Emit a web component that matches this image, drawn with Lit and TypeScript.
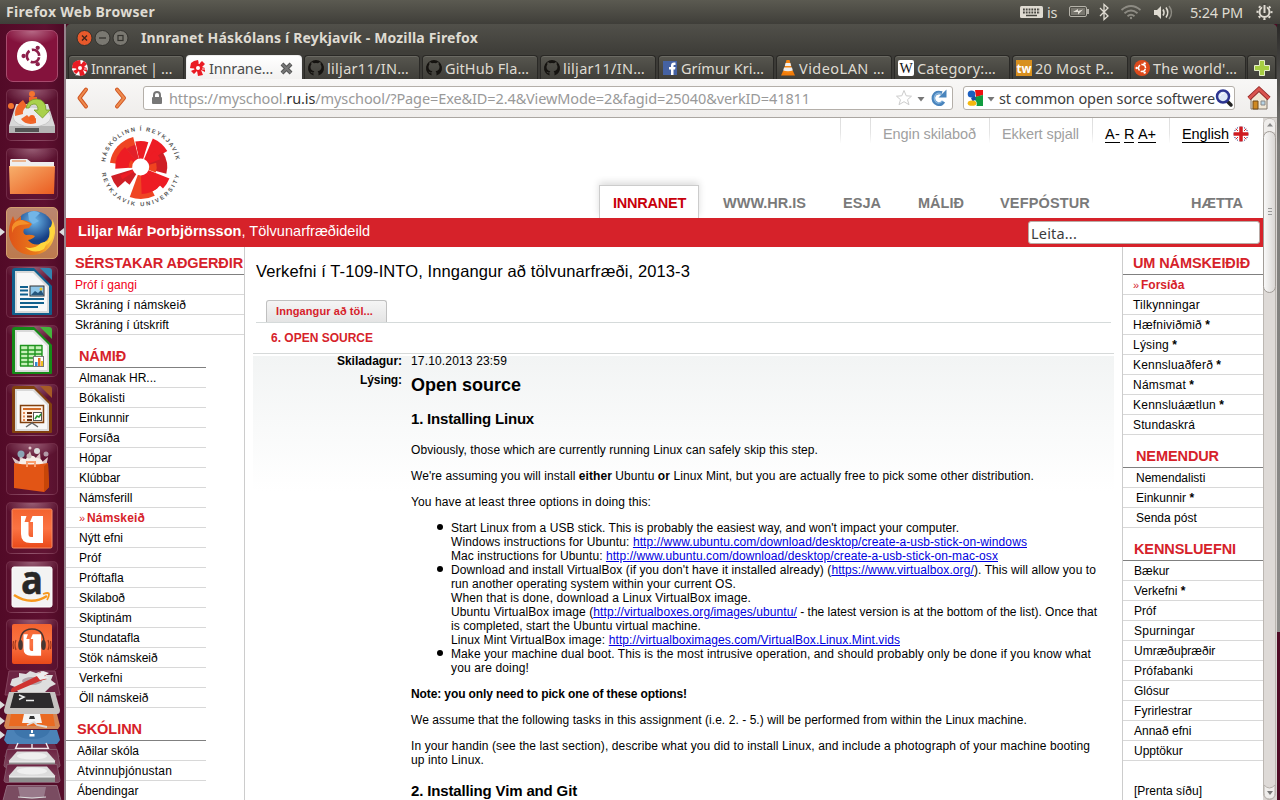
import { LitElement, html, svg, css, TemplateResult } from "lit";
import { customElement } from "lit/decorators.js";

/** A run of text tracked so that it occupies `width` pixels. */
const fit = (content: unknown, width: number, cls = "") =>
  html`<span class="fit ${cls}" data-w=${width}>${content}</span>`;

const gearCircle = (fill: string) => svg`
  <circle r="6.6" fill="none" stroke=${fill} stroke-width="2.8" stroke-dasharray="11.2 2.62" stroke-dashoffset="-1.4"/>
  <circle cx="-10" cy="0" r="2.3" fill=${fill}/><circle cx="5" cy="-8.7" r="2.3" fill=${fill}/><circle cx="5" cy="8.7" r="2.3" fill=${fill}/>`;

const ruMark = svg`
  <path d="M-4 -7L0-8L1-4L4-7L7-4L4-1L7 0L7 4L3 2L5 7L0 8L-1 3L-4 6L-7 3L-3 1L-8 0L-7-5Z" fill="#ea1c24"/>
  <path d="M1-4L2-8M-4 1L-8 1.500M-1 4L-4 7.500M4 1L8 1" stroke="#fff" stroke-width=".9"/><circle r="2" fill="#fff"/>`;

const octocat = svg`<path d="M0-8a8 8 0 0 0-2.5 15.6V5.2C-4.600 5.600-5.200 4.400-5.600 3.500c1 .2 1.400 1.500 3.200 1C-2.200 3.700-1.900 3.400-1.600 3.200-4.300 2.800-5.500 1.500-5.500-.9c0-1 .3-1.800.9-2.500-.2-.7-.2-1.500.1-2.300 1 0 1.900.6 2.500 1a8 8 0 0 1 4 0c.6-.4 1.500-1 2.500-1 .3.800.3 1.600.1 2.300.6.700.9 1.500.9 2.500 0 2.400-1.200 3.700-3.900 4.100.6.500.9 1.200.9 2.200v2.200A8 8 0 0 0 0-8Z" fill="#151310"/>`;

interface Tab { label: string; w: number; icon: TemplateResult; active?: boolean; }

const tabs: Tab[] = [
  { label: "Innranet | …", w: 81, icon: svg`<circle r="7.800" fill="#fff"/>${ruMark}` },
  { label: "Innrane…", w: 64, icon: ruMark, active: true },
  { label: "liljar11/IN…", w: 82, icon: octocat },
  { label: "GitHub Fla…", w: 84, icon: octocat },
  { label: "liljar11/IN…", w: 82, icon: octocat },
  { label: "Grímur Kri…", w: 83, icon: svg`<rect x="-7" y="-7" width="14" height="14" fill="#4562a3"/><path d="M1 7V1.500h-2v-2.500h2V-2.500c0-2 1-3 3-3h1.500v2.500H4.500c-1 0-1 .3-1 2h2l-.4 2.500H3.500V7Z" fill="#fff"/>` },
  { label: "VideoLAN …", w: 86, icon: svg`<path d="M-5 3h10l2 4.500H-7Z" fill="#f07a08"/><path d="M-1.500-8h3L5 4.500q-5 2-10 0Z" fill="#f58410"/><path d="M-2.400-5h4.800l.8 3h-6.400ZM-4-.5h8l.8 3q-4.800 1.500-9.600 0Z" fill="#eee"/>` },
  { label: "Category:…", w: 79, icon: svg`<rect x="-8" y="-8" width="16" height="16" rx="2" fill="#fff"/><text x="0" y="5" text-anchor="middle" font-family="Liberation Serif, serif" font-size="14" fill="#111">W</text>` },
  { label: "20 Most P…", w: 79, icon: svg`<rect x="-8" y="-8" width="16" height="16" fill="#d8901f"/><text x="0" y="5" text-anchor="middle" font-family="Open Sans, sans-serif" font-weight="bold" font-size="13" textLength="15" lengthAdjust="spacingAndGlyphs" fill="#fff">tw</text>` },
  { label: "The world'…", w: 84, icon: svg`<circle r="8" fill="#dd4a1c"/><g transform="scale(.53)">${gearCircle("#fff")}</g>` },
];

const officeDoc = (dark: string, mid: string, inner: TemplateResult) => svg`
  <path d="M9 2h19l18 18v28q0 1-1 1H7q-1 0-1-1V5q0-3 3-3Z" fill=${dark}/>
  <path d="M34 2h9q3 0 3 3v9Z" fill=${mid}/>
  <path d="M9 5h19l15 15v27H9Z" fill="#d9d9d9"/>
  <path d="M11 7h16l14 14v24H11Z" fill="#f8f8f8"/>${inner}`;

const uGlyph = svg`<path d="M15 14h5.500l-2 6h4v12q0 3 2.500 3h2V20h-3l2.500-6h10.500v27H24.500q-9.500 0-9.500-9Z" fill="#fff"/>`;

const launcher: { icon: TemplateResult; hot?: boolean; dash?: boolean }[] = [
  { dash: true, icon: svg`<circle cx="26" cy="26" r="15" fill="#fff"/><g transform="translate(27 26) scale(.94)">${gearCircle("#8d1f4b")}</g>` },
  { icon: svg`<path d="M10 15h32l7 22v7H3v-7Z" fill="#d8d8d8"/><ellipse cx="26" cy="28" rx="19" ry="10" fill="#ececec" stroke="#c8c8c8"/><path d="M3 37h46v7H3Z" fill="#b5b5b5"/><path d="M9 39h24v4H9Z" fill="#555"/><path d="M9 27q-1-10 8-16l4 6q-5 4-4 8ZM23 8h8v6q-4-1-8 0ZM15 30l6-4q4 5 9 3v5q-10 3-15-4Z" fill="#f0662a"/><circle cx="5" cy="17" r="3" fill="#f4742f"/><circle cx="26" cy="5" r="3" fill="#f4742f"/><circle cx="26" cy="29" r="3" fill="#f0601e"/><path d="M20 19q2-9 11-9 9 1 9 11h4l-7.500 8-8.500-8h4q0-6-4-6-4 0-5 4Z" fill="#a9d14c" stroke="#759b27" stroke-width=".8"/>` },
  { icon: svg`<path d="M5 11h16l4 3h23v8H4V12Z" fill="#eee"/><path d="M6 13h14" stroke="#e6a070" stroke-width="1.500"/><path d="M3 18h46l-1 28H4Z" fill="url(#orange)"/><path d="M3.500 18.500h45" stroke="#ffc48a"/>` },
  { hot: true, icon: svg`<circle cx="28" cy="24" r="20" fill="url(#globe)"/><path d="M22 6q6-4 12 0l-5 5 4 3-6 3-4-4Z" fill="#72b5e7"/><path d="M46 12q5 8 2 19-5 17-23 17Q7 47 3 29q-1-10 4-20l2 5 6-5v4q6 0 11 4l-3 4-5 1q-2 4 2 6 5-1 9 1-2 3-7 4 5 6 12 4 9-2 11-13 2-4 1-12Z" fill="url(#fox)"/><path d="M46 14q4 9 0 18l-6 7q5-10 3-18 3-1 3-7ZM35 36q-7 7-16 4 9 8 19 2l4-8Z" fill="#ffd63d"/><path d="M6 20q2-7 10-7l8 4-10 1q-6 1-8 8Z" fill="#f59029"/>` },
  { icon: officeDoc("#11608d", "#3484b0", svg`<path d="M14 21h8M14 24.500h8M14 28.500h8M14 33h24M14 37h24M14 41h18" stroke="#11608d" stroke-width="2"/><rect x="24" y="20" width="14" height="10" fill="#8fc6e8" stroke="#333"/><path d="M25 29l4-4 3 2 3-3 3 5Z" fill="#25557b"/><circle cx="35" cy="23" r="1.500" fill="#eec51c"/>`) },
  { icon: officeDoc("#168a18", "#45b43d", svg`<path d="M14 20h22v21H14Z" fill="#c5f0b8"/><path d="M14 20.500h22M14 25h22M14 29h22M14 33h22M14 37h22M14 41h22M14.500 20v21M22 20v21M29 20v21M36 20v21" stroke="#20941f" stroke-width="1.400"/><rect x="27.500" y="31.500" width="10" height="10" fill="#fff" stroke="#777"/><path d="M29 41v-4h2.500v4Z" fill="#3388d0"/><path d="M32 41v-8h2.500v8Z" fill="#e76f24"/><path d="M35 41v-5h2v5Z" fill="#edc020"/>`) },
  { icon: officeDoc("#82410f", "#a65b26", svg`<rect x="14.500" y="21.500" width="23" height="17" fill="#fff1e5" stroke="#82410f" stroke-width="1.500"/><path d="M17 25h18" stroke="#d16b28" stroke-width="2"/><path d="M17 29h2M17 32.500h2M17 36h2" stroke="#e68a53" stroke-width="2"/><path d="M21 29h5M21 32.500h5M21 36h5" stroke="#692d0b" stroke-width="2"/><rect x="27.500" y="28.500" width="8" height="8" fill="#fff" stroke="#555"/><path d="M29 35l2-3 2 1 2-3" stroke="#22952d" fill="none" stroke-width="1.500"/><path d="M20 43l6-4 6 4" stroke="#666" stroke-width="1.500" fill="none"/>`) },
  { icon: svg`<path d="M10 22L6 14l8 5-1-9 6 8 5-10 3 10 7-8 1 10 7-6-2 10Z" fill="#f4e8e2" opacity=".85"/><path d="M12 22q2-8 8-6 6-6 10-1 6-1 8 7Z" fill="#f7efe9"/><circle cx="15" cy="11" r="3.500" fill="#8ba4b4"/><circle cx="31" cy="8" r="3" fill="#ddd"/><circle cx="40" cy="11" r="2.500" fill="#b29aa8"/><circle cx="24" cy="5" r="1.500" fill="#e5c9cf"/><circle cx="23" cy="13" r="2.500" fill="#c9bdb8"/><path d="M8 20q16 3 34 0l1 24-5 5-30-4Z" fill="#e25515"/><path d="M42 20l-4 3v26l5-5Z" fill="#c64508"/><path d="M21 24v-5h8v5" fill="none" stroke="#f9a070" stroke-width="2"/>` },
  { icon: svg`<rect x="6" y="7" width="40" height="39" rx="1.500" fill="url(#orange2)" stroke="#f79069"/>${uGlyph}` },
  { icon: svg`<rect x="6" y="6" width="40" height="40" rx="2" fill="#f3f3f3" stroke="#fff"/><text x="26" y="33" text-anchor="middle" font-family="Open Sans, sans-serif" font-weight="bold" font-size="39" textLength="22" lengthAdjust="spacingAndGlyphs" fill="#272727" stroke="#272727" stroke-width=".5">a</text><path d="M8 34q17 11 33 1" fill="none" stroke="#f7981d" stroke-width="2.600"/><path d="M37 33q6-2 6 0 0 3-2 6" fill="none" stroke="#f7981d" stroke-width="1.800"/>` },
  { icon: svg`<rect x="6" y="5" width="40" height="40" rx="2" fill="url(#orange2)"/><g transform="translate(5.500 4) scale(.8)">${uGlyph}</g><path d="M14 27q-1-17 12-17t12 17" fill="none" stroke="#4b3531" stroke-width="1.500"/><ellipse cx="14.500" cy="26" rx="2.300" ry="5" fill="#473733"/><ellipse cx="37.500" cy="26" rx="2.300" ry="5" fill="#473733"/><path d="M10 21q-2 5 0 10M7.500 22q-1 4 0 8M42 21q2 5 0 10M44.500 22q1 4 0 8" fill="none" stroke="#a2361a" stroke-width="1.200"/>` },
];

interface Item { t: string; star?: boolean; on?: boolean; red?: boolean; }
interface Group { title: string; w: number; pad: number; items: Item[]; narrow?: boolean; }
const items = (list: string): Item[] =>
  list.split("|").map((s) => ({
    t: s.replace(/[*»!]/g, ""), star: s.includes("*"), on: s.includes("»"), red: s.includes("!"),
  }));

/** Label widths for entries that need tracking. */
const labelWidths: Record<string, number> = {
  "Próf í gangi": 62, "Skráning í námskeið": 111, "Skráning í útskrift": 94, "Bókalisti": 46, "Námskeið": 58,
  "Tilkynningar": 67, "Hæfniviðmið": 69, "Lýsing": 36, "Kennsluaðferð": 80, "Námsmat": 53, "Kennsluáætlun": 83,
  "Stundaskrá": 62, "Atvinnuþjónustan": 95, "Spurningar": 61, "Fyrirlestrar": 58, "Prófabanki": 59,
};

const leftNav: Group[] = [
  { title: "SÉRSTAKAR AÐGERÐIR", w: 168, pad: 9, items: items("Próf í gangi!|Skráning í námskeið|Skráning í útskrift") },
  { title: "NÁMIÐ", w: 47, pad: 13, narrow: true, items: items("Almanak HR...|Bókalisti|Einkunnir|Forsíða|Hópar|Klúbbar|Námsferill|»Námskeið|Nýtt efni|Próf|Próftafla|Skilaboð|Skiptinám|Stundatafla|Stök námskeið|Verkefni|Öll námskeið") },
  { title: "SKÓLINN", w: 65, pad: 11, narrow: true, items: items("Aðilar skóla|Atvinnuþjónustan|Ábendingar") },
];
const rightNav: Group[] = [
  { title: "UM NÁMSKEIÐIÐ", w: 117, pad: 10, items: items("»Forsíða|Tilkynningar|Hæfniviðmið*|Lýsing*|Kennsluaðferð*|Námsmat*|Kennsluáætlun*|Stundaskrá") },
  { title: "NEMENDUR", w: 83, pad: 13, items: items("Nemendalisti|Einkunnir*|Senda póst") },
  { title: "KENNSLUEFNI", w: 102, pad: 11, items: items("Bækur|Verkefni*|Próf|Spurningar|Umræðuþræðir|Prófabanki|Glósur|Fyrirlestrar|Annað efni|Upptökur") },
];

/** Logo blades: start angle, end angle, outer radius, colour. */
const blades: [number, number, number, string][] = [
  [188, 256, 31, "#ef4423"], [176, 232, 25.5, "#ed1c24"], [232, 256, 23, "#e3202a"], [176, 215, 12, "#f0431f"],
  [258, 287, 26, "#ed1c24"], [293, 329, 31, "#ed1c24"], [326, 375, 26.5, "#cf1f26"], [310, 338, 21, "#ed1c24"],
  [22, 44, 31, "#ed1c24"], [42, 66, 27, "#ed1c24"], [64, 110, 32, "#ef4423"],
  [50, 88, 27, "#ed1c24"], [122, 144, 21, "#cf1f26"], [138, 163, 31, "#cf1f26"], [146, 158, 22, "#ed1c24"], [345, 380, 16, "#f0431f"],
];
const blade = ([a, b, r, c]: [number, number, number, string]) => {
  const p = (d: number, q: number) => `${(Math.cos((d * Math.PI) / 180) * q).toFixed(2)} ${(Math.sin((d * Math.PI) / 180) * q).toFixed(2)}`;
  return svg`<path d="M${p(a, 8)}L${p(a, r)}A${r} ${r} 0 0 1 ${p(b, r)}L${p(b, 8)}Z" fill=${c}/>`;
};

@customElement("app-root")
export class AppRoot extends LitElement {
  static styles = css`
    :host { display: flex; flex-direction: column; width: 1280px; height: 800px; overflow: hidden; background: #4f0b25; font: 12px/14px "Liberation Sans", Arial, sans-serif; color: #000; }
    * { box-sizing: border-box; }
    svg { display: block; overflow: visible; flex: none; }
    .fit { display: inline-block; white-space: nowrap; }
    .ui { font-family: "Noto Sans", "Open Sans", sans-serif; font-size: 14.5px; line-height: 20px; }
    .panel { height: 24px; flex: none; display: flex; align-items: center; background: linear-gradient(#5b5a51, #3f3e39); color: #dfdbd2; padding: 0 7px 0 6px; }
    .panel .grow { flex: 1; }
    .panel b { font-weight: 700; font-size: 14px; }
    .desk { display: flex; height: 776px; }
    .launcher { width: 66px; flex: none; display: flex; flex-direction: column; position: relative; padding: 6px 0 0 6px; gap: 7px; background: linear-gradient(90deg, #520a27, #5d1030 70%, #4d0a25); border-right: 2px solid #94818a; }
    .tile { width: 52px; height: 52px; flex: none; border-radius: 5px; border: 1px solid #8c496377; background: radial-gradient(ellipse 28px 15px at 50% 0, #c79dad88, transparent), #75294533; }
    .tile:nth-child(11) { margin-top: -1px; }
    .tile svg { margin: -1px; }
    .tile.dash { background: radial-gradient(ellipse 28px 14px at 50% 0, #d7a4b799, transparent), #84123c; border-color: #a84b6e; border-radius: 7px; }
    .tile.hot { background: linear-gradient(#bb8770, #bc7a4e); border-color: #d3a070; }
    .stack { position: absolute; left: 0; top: 646px; }
    .arrows { position: absolute; left: 0; top: 0; }
    .win { width: 1211px; flex: none; display: flex; flex-direction: column; background: #3c3b37; border-top-left-radius: 5px; border-top-right-radius: 5px; }
    .title { height: 31px; flex: none; display: flex; align-items: center; padding: 0 0 3px 10px; background: linear-gradient(#51504a, #3f3e39 90%); border-radius: 5px 5px 0 0; color: #dfdbd2; font-size: 14px; }
    .title .fit { margin-left: 12px; font-weight: 700; }
    .tabs { height: 24px; flex: none; display: flex; gap: 2px; padding-left: 2px; }
    .tab { width: 116px; flex: none; height: 24px; display: flex; align-items: center; padding: 1px 0 0 3px; gap: 3px; border: 1px solid #2a2926; border-bottom: 0; border-radius: 4px 4px 0 0; background: linear-gradient(#57564f, #3f3e39); box-shadow: inset 0 1px #6b6a63; color: #dfdbd2; }
    .tab.active { background: linear-gradient(#fff, #f2f1f0); color: #4c4c4c; border-color: #eee; box-shadow: none; }
    .tab .x { margin-left: 4px; }
    .tab.add { width: 29px; padding-left: 6px; margin-left: -1px; }
    .bar { height: 39px; flex: none; display: flex; align-items: center; background: linear-gradient(#f8f7f6, #efedeb); border-bottom: 1px solid #aaa6a1; padding: 0 0 0 10px; color: #3c3c3c; }
    .field { height: 24px; border: 1px solid #b4afa9; border-radius: 3px; background: #fff; display: flex; align-items: center; }
    .addr { width: 810px; margin-left: 14px; padding-left: 7px; color: #999; }
    .addr .fit { margin-left: 6px; margin-right: 85px; }
    .addr em { font-style: normal; color: #333; }
    .find { width: 272px; margin-left: 10px; padding-left: 3px; }
    .bar .home { margin-left: 12px; }
    .view { flex: 1; display: flex; min-height: 0; background: #fff; }
    .page { width: 1197px; height: 682px; flex: none; overflow: hidden; }
    .scroll { width: 14px; flex: none; background: #d9d5d2; }
    .head { height: 100px; display: flex; }
    .logo { width: 533px; flex: none; padding: 5px 0 0 30px; }
    .menus { width: 664px; display: flex; flex-direction: column; justify-content: space-between; }
    .quick { height: 25px; display: flex; padding-left: 241px; font-size: 14.5px; line-height: 17px; color: #a0a0a0; }
    .cell { height: 25px; border-left: 1px solid; border-image: linear-gradient(#ddd, #e5e5e5 60%, #fff) 1; padding: 8px 0 0 12px; display: flex; flex: none; }
    .cell u { text-decoration: none; color: #000; border-bottom: 1px solid #000; height: 17px; margin-right: 4px; }
    .main-menu { height: 33px; display: flex; font-weight: bold; font-size: 14.5px; line-height: 36px; color: #7a7a7a; }
    .main-menu .cur { width: 100px; height: 33px; padding-left: 13px; border: 1px solid #ccc; border-bottom: 0; color: #c8000b; box-shadow: 0 -3px 7px #ddd; clip-path: inset(-9px -9px 0 -9px); line-height: 34px; }
    .red { height: 29px; background: #d6222a; color: #fff; display: flex; justify-content: space-between; font-size: 14.5px; line-height: 26px; padding: 0 3px 0 12px; }
    .red .field { width: 232px; margin-top: 3px; height: 23px; padding-left: 2px; color: #3c3c3c; border-color: #b9aaa5; }
    .cols { display: flex; height: 553px; }
    .left { width: 179px; flex: none; border-right: 1px solid #ccc; }
    .right { width: 141px; flex: none; border-left: 1px solid #ccc; }
    .grp h4 { margin: 0; height: 33px; padding-top: 13px; font-size: 14.5px; line-height: 17px; color: #d6222a; border-bottom: 1px solid #808080; }
    .grp.first h4 { height: 28px; padding-top: 8px; }
    .grp.narrow { width: 140px; }
    .item { height: 20px; line-height: 21px; border-bottom: 1px solid #d8d8d8; white-space: nowrap; }
    .item.on, .item.hot { color: #d6222a; }
    .item.hot { color: #f00018; }
    .item i { font-style: normal; display: inline-block; width: 8px; font-size: 11px; }
    .print { padding: 23px 0 0 11px; }
    .main { flex: 1; padding: 0 8px; }
    .main h1 { margin: 0; font-weight: normal; font-size: 16.5px; line-height: 20px; padding: 14px 0 19px 3px; }
    .tabline { margin: 0 3px; height: 23px; padding-left: 10px; border-bottom: 1px solid #d5dada; display: flex; }
    .chip { width: 121px; height: 22px; border: 1px solid #c0c0c0; border-bottom: 0; border-radius: 3px 3px 0 0; background: linear-gradient(#f5f5f5, #e4e4e4); color: #d6222a; font-weight: bold; font-size: 11px; line-height: 21px; padding-left: 9px; }
    .sub { height: 31px; padding: 8px 0 0 18px; color: #d6222a; font-weight: bold; border-bottom: 1px solid #d6d9d9; }
    .sheet { margin-top: 2px; height: 450px; background: linear-gradient(#f2f4f4, #fff 136px); display: grid; grid-template-columns: 149px 1fr; column-gap: 9px; grid-template-rows: 18px 1fr; }
    .lbl { text-align: right; font-weight: bold; line-height: 14px; margin-top: -1px; }
    .row1 { margin-top: -2px; }
    .body h2 { margin: 1px 0 0; font-size: 18px; line-height: 20px; }
    .body h3 { margin: 15px 0 15px; font-size: 15px; line-height: 18px; }
    .body p { margin: 0 0 12px; display: flex; flex-direction: column; align-items: flex-start; }
    .body ul { margin: 0 0 12px; padding: 0 0 0 40px; list-style: none; }
    .body li { display: flex; flex-direction: column; align-items: flex-start; position: relative; }
    .body li::before { content: ""; position: absolute; left: -14px; top: 3px; width: 6px; height: 6px; border-radius: 50%; background: #000; }
    .body a { color: #0000e0; text-decoration: underline; }
    .body .last { margin-top: 15px; }
    .edge { width: 3px; height: 608px; background: linear-gradient(#292826, #7d7c79 20%, #8d8c8a); }
  `;

  protected updated() {
    this.renderRoot.querySelectorAll<HTMLElement>(".fit").forEach((el) => {
      el.style.letterSpacing = "0px";
      const n = Array.from(el.textContent || "").length;
      const gap = (Number(el.dataset.w) - el.getBoundingClientRect().width) / n;
      el.style.letterSpacing = `${gap.toFixed(4)}px`;
    });
  }

  private group(g: Group, i: number) {
    const label = (t: string) => (labelWidths[t] ? fit(t, labelWidths[t]) : t);
    return html`<div class="grp ${i === 0 ? "first" : ""} ${g.narrow ? "narrow" : ""}">
      <h4 style="padding-left:${g.pad}px">${fit(g.title, g.w)}</h4>
      ${g.items.map((it) => html`<div class="item ${it.on ? "on" : ""} ${it.red ? "hot" : ""}" style="padding-left:${g.pad}px">${it.on ? html`<i>»</i><b>${label(it.t)}</b>` : label(it.t)}${it.star ? html` <b>*</b>` : ""}</div>`)}
    </div>`;
  }

  private panel() {
    return html`<div class="panel ui">
      <b>${fit("Firefox Web Browser", 149)}</b><span class="grow"></span>
      <svg width="23" height="14" viewBox="0 0 23 14"><rect y="1" width="23" height="12" rx="1.500" fill="#dfdbd2"/><path d="M3 4.500h17M3 7.500h17" stroke="#46453f" stroke-width="1.800" stroke-dasharray="1.800 1"/><path d="M6 10.500h11" stroke="#46453f" stroke-width="1.500"/></svg>
      <span style="width:4px"></span>${fit("is", 10)}
      <svg width="212" height="24" viewBox="1058 0 212 24" style="margin-right:-142px" fill="none" stroke="#dfdbd2">
        <rect x="1070.500" y="6.500" width="17" height="10" rx="1.500" stroke="#b5b2a9"/><path d="M1089 9v5" stroke="#b5b2a9" stroke-width="2"/><path d="M1072 8v7h14V8Z" fill="#77756d" stroke="none"/><path d="M1074 12l5-3v2l5-1.500-5 5v-2.500Z" fill="#dfdbd2" stroke="none"/>
        <path d="M1101 8l8 8-4 3.500V4.500l4 3.500-8 8" stroke-width="1.300"/>
        <g stroke="#8d8b83" stroke-width="1.900"><path d="M1122.500 10q9.500-8 19 0M1125.500 13.200q6.500-5.500 13 0M1128.500 16.200q3.500-3 7 0"/></g><circle cx="1132" cy="18" r="1.200" fill="#8d8b83" stroke="none"/>
        <path d="M1155 10h3l4-4v13l-4-4h-3Z" fill="#dfdbd2" stroke="none"/><path d="M1164 9.500q2 3 0 6M1167 7.500q3.500 5 0 10" stroke-width="1.600"/><path d="M1170 6q5 6.500 0 13" stroke="#8d8b83" stroke-width="1.500"/>
      </svg>
      <span style="width:63px"></span>${fit("5:24 PM", 53)}
      <svg width="17" height="18" viewBox="-8.500 -9 17 18" style="margin-left:13px" fill="none" stroke="#dfdbd2"><circle r="5" stroke-width="2"/><circle r="7" stroke-width="2" stroke-dasharray="2.200 3.300" stroke-dashoffset="1.100"/><path d="M0-9V0" stroke="#4c4b45" stroke-width="4.500"/><path d="M0-7V1" stroke-width="2"/></svg>
    </div>`;
  }

  private side() {
    return html`<div class="launcher">
      ${launcher.map((l) => html`<div class="tile ${l.hot ? "hot" : ""} ${l.dash ? "dash" : ""}"><svg width="52" height="52" viewBox="0 0 52 52">
        <defs>
          <linearGradient id="orange" x2="1" y2="1"><stop stop-color="#f7b06c"/><stop offset="1" stop-color="#ea5b20"/></linearGradient>
          <linearGradient id="orange2" x2="0" y2="1"><stop stop-color="#f3632f"/><stop offset=".5" stop-color="#fb7343"/><stop offset="1" stop-color="#e94919"/></linearGradient>
          <radialGradient id="globe" cy=".25"><stop stop-color="#6cb9ec"/><stop offset="1" stop-color="#173f84"/></radialGradient>
          <linearGradient id="fox" x2="1"><stop stop-color="#df5318"/><stop offset=".6" stop-color="#e97a1b"/><stop offset="1" stop-color="#ffd043"/></linearGradient>
        </defs>${l.icon}</svg></div>`)}
      <svg class="stack" width="64" height="130" viewBox="0 670 64 130">
        <defs><linearGradient id="fade" x2="0" y2="1"><stop stop-color="#6d2443"/><stop offset="1" stop-color="#7d475e"/></linearGradient></defs>
        <path d="M0 670h64v130H0Z" fill="#550c29"/>
        <path d="M9 671h46l5 24H5Z" fill="#6d2543" stroke="#84435d"/>
        <path d="M12 679l7-2 0-4 7 1 4-3 6 2 6-2 3 4 8 0-2 5 5 4-6 3-5 5H18l-3-5-5-2Z" fill="#dedede"/><ellipse cx="32" cy="681" rx="10" ry="4" fill="#b3a5ab"/>
        <path d="M12 688l25-12 3-4 8 1-4 4 3 2-7 2-26 11q-5 1-2-4Z" fill="#cf3431"/><path d="M36 675l7-4 6 2-5 3 5 2-9 2Z" fill="#eee"/>
        <path d="M9 692h46l5 18q0 4-3 4H7q-3 0-3-4Z" fill="#c6c3c1"/><path d="M14 693h36l4 15H10Z" fill="#2d2b2d"/><path d="M19 695l5 2-5 2.500M26 700.500h8" stroke="#eee" fill="none" stroke-width="1.500"/>
        <path d="M7 714h50l3 12-2 3H6l-2-3Z" fill="#d48756"/><path d="M11 714h42l2 12H9Z" fill="#ea6a22"/><path d="M24 714h16l2 9H22Z" fill="#f4f4f4"/><path d="M29 719l1-3h4l1 3Z" fill="#333"/><path d="M27 725l7-3 3 3 10 2" stroke="#ddd" stroke-width="1.800" fill="none"/>
        <path d="M7 730h50l3 10-3 4H7l-3-4Z" fill="#4b82b7"/><path d="M14 730q3 9 18 9t18-9Z" fill="#3d75ab"/><path d="M31 730h2v3h-2ZM29.500 734h5v2.500h-5Z" fill="#fff"/>
        <path d="M9 744h46l5 13H4Z" fill="#6b2946"/><path d="M18 743l-2.500 5.500h33L46 743M32 744v4" fill="none" stroke="#f1e9ed" stroke-width="1.400"/>
        ${[0, 15].map((y) => svg`<g transform="translate(0 ${y})"><path d="M7 749.500h50l3 16q0 2-3 2H7q-3 0-3-2Z" fill="url(#fade)" stroke="#84566a"/><path d="M17 751.500h30l8 9v6H9v-6Z" fill="#dcdcdc"/><path d="M9 762h46v5H9Z" fill="#8e8e8e"/><path d="M9 762h46" stroke="#f4f4f4"/><ellipse cx="32" cy="756" rx="15" ry="3.500" fill="#efefef"/></g>`)}
        <path d="M7 785.500h50l4 15H3Z" fill="#7a4c61" stroke="#906a7c"/><path d="M18 787h28l-2 10q-12 3-24 0Z" fill="#98798a"/><path d="M18 797q14 2 28 0" stroke="#ddd" fill="none"/>
        <path d="M0 701l5 4-5 4ZM0 717l5 4-5 4ZM0 731l5 4-5 4Z" fill="#ddd"/>
      </svg>
      <svg class="arrows" width="64" height="240" viewBox="0 24 64 240"><path d="M0 228l5 4-5 4ZM64 228l-5 4 5 4Z" fill="#ddd"/></svg>
    </div>`;
  }

  private chrome() {
    return html`
      <div class="title ui">
        <svg width="53" height="18" viewBox="0 0 53 18" fill="none"><circle cx="8.500" cy="9" r="7.500" fill="#e9592b" stroke="#33322e"/><path d="M6 6.500l5 5M11 6.500l-5 5" stroke="#40241a" stroke-width="1.400"/><circle cx="26.500" cy="9" r="7.500" fill="#7a7871" stroke="#33322e"/><path d="M23 9h7" stroke="#33322e" stroke-width="1.300"/><circle cx="44.500" cy="9" r="7.500" fill="#7a7871" stroke="#33322e"/><rect x="42" y="6.500" width="5" height="5" stroke="#33322e" stroke-width="1.200"/></svg>
        ${fit("Innranet Háskólans í Reykjavík - Mozilla Firefox", 337)}
      </div>
      <div class="tabs ui">
        ${tabs.map((t) => html`<div class="tab ${t.active ? "active" : ""}"><svg width="16" height="16" viewBox="-8 -8 16 16">${t.icon}</svg>${fit(t.label, t.w)}${t.active ? html`<svg class="x" width="13" height="13" viewBox="0 0 13 13"><path d="M2 2l9 9M11 2l-9 9" stroke="#555" stroke-width="4"/><path d="M2 2l9 9M11 2l-9 9" stroke="#777" stroke-width="2"/></svg>` : ""}</div>`)}
        <div class="tab add"><svg width="16" height="16" viewBox="0 0 16 16"><path d="M5.500 .5h5v5h5v5h-5v5h-5v-5h-5v-5h5Z" fill="#a7ce42" stroke="#e4efc7"/></svg></div>
      </div>
      <div class="bar ui">
        <svg width="53" height="22" viewBox="0 0 53 22" fill="none" stroke-linecap="round" stroke-linejoin="round"><path d="M10 2.500L3.500 11l6.500 8.500M41 2.500L48 11l-7 8.500" stroke="#cf5623" stroke-width="4"/><path d="M10 2.500L3.500 11l6.500 8.500M41 2.500L48 11l-7 8.500" stroke="#ef8b4e" stroke-width="2"/></svg>
        <div class="field addr">
          <svg width="12" height="14" viewBox="0 0 12 14"><path d="M3 7V4q0-3 3-3t3 3v3" fill="none" stroke="#777" stroke-width="2"/><rect x="1" y="6" width="10" height="7" rx="1" fill="#777"/></svg>
          ${fit(html`https://myschool.<em>ru.is</em>/myschool/?Page=Exe&amp;ID=2.4&amp;ViewMode=2&amp;fagid=25040&amp;verkID=41811`, 641)}
          <svg width="52" height="18" viewBox="0 0 52 18"><path d="M9 1.500l2.200 5.300 5.300.4-4 3.500 1.500 5L9 12.700l-5 3 1.500-5-4-3.500 5.300-.4Z" fill="#fff" stroke="#ccc"/><path d="M22.500 8h7L26 12.500Z" fill="#777"/><path d="M48.500 12.500q-2 3.500-6 2.500-5-2-4-7.500 2-5.500 8.500-3.500" fill="none" stroke="#4a85bd" stroke-width="3.600"/><path d="M43.500 8.500h8V.5Z" fill="#4a85bd"/><path d="M47.500 12q-2 2.500-5 2-4-2-3-6.500 2-4.500 7-3" fill="none" stroke="#8bb8e0" stroke-width="1.200"/></svg>
        </div>
        <div class="field find">
          <svg width="32" height="16" viewBox="0 0 32 16"><rect width="16" height="16" rx="1" fill="#fff"/><path d="M8 0h8v5L9 7Z" fill="#ee1111"/><path d="M8 7l8-2v11H9.500q1-4-1.500-6Z" fill="#119c3f"/><ellipse cx="4.500" cy="4" rx="3.800" ry="3.600" fill="#1c5fc0"/><path d="M4 8l4-2.500 1 4-3.500 2Z" fill="#1c4fa8"/><ellipse cx="5" cy="13.200" rx="4.300" ry="2.600" fill="#f5b80e"/><path d="M20.500 7h7L24 11.500Z" fill="#777"/></svg>
          ${fit("st common open sorce softwere", 216)}
          <svg width="18" height="18" viewBox="0 0 18 18"><path d="M12 12l4 4" stroke="#222" stroke-width="3.500" stroke-linecap="round"/><circle cx="8" cy="7.500" r="6" fill="#dce8f7" stroke="#2c3590" stroke-width="2.500"/><path d="M5 7q1-3 4-3" stroke="#fff" fill="none"/></svg>
        </div>
        <svg class="home" width="24" height="24" viewBox="0 0 24 24"><path d="M4 11v12h16V11l-8-7Z" fill="#f0e7d5" stroke="#80766a"/><path d="M6 15h5v8H6Z" fill="#cf8920" stroke="#704a18"/><path d="M14 15h4v4h-4Z" fill="#b7d4e4" stroke="#888"/><path d="M2 12.500L12 3l10 9.500" fill="none" stroke="#8e2727" stroke-width="4.500"/><path d="M2 12.500L12 3l10 9.500" fill="none" stroke="#d9534d" stroke-width="3"/></svg>
      </div>`;
  }

  private header() {
    return html`<div class="head">
      <div class="logo"><svg width="90" height="90" viewBox="-44.700 -44 90 90">
        ${blades.map(blade)}<circle r="8.500" fill="#fff"/>
        <defs><path id="arcTop" d="M-35.500 -5A35.800 35.800 0 0 1 35.500 -5"/><path id="arcBot" d="M-39 6A39.500 39.500 0 0 0 39 6"/></defs>
        <g font-family="Liberation Sans, sans-serif" font-size="5.800" font-weight="bold" fill="#555">
          <text textLength="101"><textPath href="#arcTop" textLength="101">HÁSKÓLINN Í REYKJAVÍK</textPath></text>
          <text textLength="109"><textPath href="#arcBot" textLength="109">REYKJAVIK UNIVERSITY</textPath></text>
        </g></svg></div>
      <div class="menus">
        <div class="quick">
          <div class="cell" style="width:30px"></div>
          <div class="cell" style="width:119px">${fit("Engin skilaboð", 93)}</div>
          <div class="cell" style="width:103px">${fit("Ekkert spjall", 77)}</div>
          <div class="cell" style="width:77px"><u>${fit("A-", 15)}</u><u>${fit("R", 10)}</u><u>${fit("A+", 18)}</u></div>
          <div class="cell" style="width:93px"><u>${fit("English", 47)}</u><svg width="16" height="16" viewBox="-8 -8 16 16"><defs><clipPath id="disc"><circle r="7.500"/></clipPath></defs><g clip-path="url(#disc)"><path d="M-8-8H8V8H-8Z" fill="#2c3c80"/><path d="M-8-8L8 8M8-8L-8 8" stroke="#fff" stroke-width="3"/><path d="M-8-8L8 8M8-8L-8 8" stroke="#d22" stroke-width="1"/><path d="M0-8V8M-8 0H8" stroke="#fff" stroke-width="6"/><path d="M0-8V8M-8 0H8" stroke="#cf1a20" stroke-width="3.500"/></g></svg></div>
        </div>
        <div class="main-menu">
          <div class="cur">${fit("INNRANET", 73)}</div>
          ${([["WWW.HR.IS", 83, 24], ["ESJA", 38, 37], ["MÁLIÐ", 46, 37], ["VEFPÓSTUR", 90, 36], ["HÆTTA", 52, 101]] as [string, number, number][]).map(([t, w, gap]) => html`<span style="margin-left:${gap}px">${fit(t, w)}</span>`)}
        </div>
      </div>
    </div>
    <div class="red"><span>${fit(html`<b>Liljar Már Þorbjörnsson</b>, Tölvunarfræðideild`, 292)}</span><div class="field ui">${fit("Leita...", 46)}</div></div>`;
  }

  private article() {
    return html`<div class="main">
      <h1>${fit("Verkefni í T-109-INTO, Inngangur að tölvunarfræði, 2013-3", 434)}</h1>
      <div class="tabline"><div class="chip">${fit("Inngangur að töl...", 97)}</div></div>
      <div class="sub">${fit("6. OPEN SOURCE", 102)}</div>
      <div class="sheet">
        <div class="lbl row1">${fit("Skiladagur:", 65)}</div><div class="row1">${fit("17.10.2013 23:59", 96)}</div>
        <div class="lbl">${fit("Lýsing:", 42)}</div>
        <div class="body">
          <h2>${fit("Open source", 110)}</h2>
          <h3>${fit("1. Installing Linux", 123)}</h3>
          <p>${fit("Obviously, those which are currently running Linux can safely skip this step.", 407)}</p>
          <p>${fit(html`We're assuming you will install <b>either</b> Ubuntu <b>or</b> Linux Mint, but you are actually free to pick some other distribution.`, 623)}</p>
          <p>${fit("You have at least three options in doing this:", 240)}</p>
          <ul>
            <li>${fit("Start Linux from a USB stick. This is probably the easiest way, and won't impact your computer.", 508)}
              ${fit(html`Windows instructions for Ubuntu: <a>http://www.ubuntu.com/download/desktop/create-a-usb-stick-on-windows</a>`, 576)}
              ${fit(html`Mac instructions for Ubuntu: <a>http://www.ubuntu.com/download/desktop/create-a-usb-stick-on-mac-osx</a>`, 547)}</li>
            <li>${fit(html`Download and install VirtualBox (if you don't have it installed already) (<a>https://www.virtualbox.org/</a>). This will allow you to`, 645)}
              ${fit("run another operating system within your current OS.", 285)}
              ${fit("When that is done, download a Linux VirtualBox image.", 300)}
              <span>${fit(html`Ubuntu VirtualBox image (<a>http://virtualboxes.org/images/ubuntu/</a>`, 346)}${fit(html`&nbsp;- the latest version is at the bottom of the list). Once that`, 300)}</span>
              ${fit("is completed, start the Ubuntu virtual machine.", 250)}
              ${fit(html`Linux Mint VirtualBox image: <a>http://virtualboximages.com/VirtualBox.Linux.Mint.vids</a>`, 449)}</li>
            <li>${fit("Make your machine dual boot. This is the most intrusive operation, and should probably only be done if you know what", 640)}
              ${fit("you are doing!", 78)}</li>
          </ul>
          <p>${fit(html`<b>Note: you only need to pick one of these options!</b>`, 276)}</p>
          <p>${fit("We assume that the following tasks in this assignment (i.e. 2. - 5.) will be performed from within the Linux machine.", 616)}</p>
          <p>${fit("In your handin (see the last section), describe what you did to install Linux, and include a photograph of your machine booting", 679)}
            ${fit("up into Linux.", 73)}</p>
          <h3 class="last">${fit("2. Installing Vim and Git", 166)}</h3>
        </div>
      </div>
    </div>`;
  }

  render() {
    return html`${this.panel()}
      <div class="desk">
        ${this.side()}
        <div class="win">
          ${this.chrome()}
          <div class="view">
            <div class="page">
              ${this.header()}
              <div class="cols">
                <div class="left">${leftNav.map((g, i) => this.group(g, i))}</div>
                ${this.article()}
                <div class="right">${rightNav.map((g, i) => this.group(g, i))}<div class="print">[Prenta síðu]</div></div>
              </div>
            </div>
            <div class="scroll"><svg width="14" height="682" viewBox="0 0 14 682"><defs><linearGradient id="thumb"><stop stop-color="#fafafa"/><stop offset="1" stop-color="#d8d5d2"/></linearGradient></defs>
              <rect x=".5" y=".5" width="12" height="681" rx="6" fill="#dedad7" stroke="#bcb7b2"/><path d="M1 14V6q0-5 5.500-5t5.500 5v8Z" fill="#efedeb"/><path d="M4 8.500h6L7 5Z" fill="#888"/>
              <rect x=".5" y="13.500" width="12" height="161" rx="6" fill="url(#thumb)" stroke="#a19c97"/><path d="M5 90.500h4M5 93.500h4M5 96.500h4" stroke="#999"/>
              <path d="M1 667q5.500 6 11 0v8q0 6-5.500 6T1 675Z" fill="#efedeb" stroke="#b5b0ab"/><path d="M4 673h6l-3 4Z" fill="#777"/></svg></div>
          </div>
        </div>
        <div class="edge"></div>
      </div>`;
  }
}
